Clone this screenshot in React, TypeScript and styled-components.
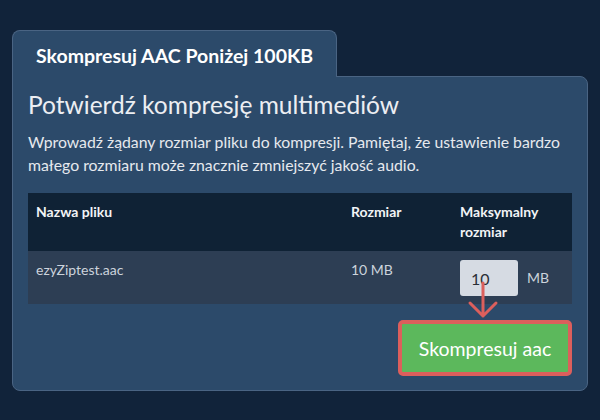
import styled, { createGlobalStyle } from "styled-components";

const GlobalStyle = createGlobalStyle`
  html, body {
    margin: 0;
    padding: 0;
    background: #11233a;
  }
  body {
    font-family: Lato, "Open Sans", sans-serif;
    color: #e8ebef;
  }
`;

const Page = styled.div`
  padding: 30px 12px 0;
`;

const Tab = styled.div`
  position: relative;
  z-index: 1;
  display: inline-flex;
  align-items: center;
  box-sizing: border-box;
  height: 47px;
  padding: 2px 23px 0 23px;
  margin-bottom: -1px;
  background: #2c4a6a;
  border: 1px solid #4a6483;
  border-bottom: none;
  border-radius: 8px 8px 0 0;
  font-size: 19.5px;
  font-weight: 700;
  color: #ffffff;
`;

const Panel = styled.section`
  background: #2c4a6a;
  border: 1px solid #4a6483;
  border-radius: 0 8px 8px 8px;
  padding: 13px 15px 14px 15px;
`;

const Heading = styled.h2`
  margin: 0;
  font-size: 24.5px;
  font-weight: 400;
  line-height: 30px;
  color: #eceef2;
`;

const Intro = styled.p`
  margin: 10px 0 17px;
  font-size: 15.8px;
  line-height: 23px;
  white-space: nowrap;
  color: #e6e9ee;
`;

const Table = styled.table`
  width: 100%;
  border-collapse: collapse;
  table-layout: fixed;
`;

const HeadCell = styled.th<{ $w?: number }>`
  width: ${(p) => (p.$w ? `${p.$w}px` : "auto")};
  background: #0f2235;
  padding: 9px 8px;
  text-align: left;
  vertical-align: top;
  font-size: 14px;
  font-weight: 700;
  line-height: 20px;
  color: #f2f4f6;
`;

const Cell = styled.td`
  background: #2d3e54;
  padding: 9px 8px 8px;
  vertical-align: top;
  font-size: 14px;
  line-height: 20px;
  color: #ccd3dc;
`;

const SizeBox = styled.div`
  position: relative;
  display: flex;
  align-items: center;
  gap: 9px;
  font-size: 14px;
  color: #ccd3dc;
`;

const SizeInput = styled.input`
  box-sizing: border-box;
  width: 58px;
  height: 36px;
  padding: 0 0 0 11px;
  border: none;
  border-radius: 3px;
  background: #d6dbe3;
  font-family: Lato, sans-serif;
  font-size: 16px;
  color: #2a2f36;
  outline: none;
`;

const Arrow = styled.svg`
  position: absolute;
  left: 9px;
  top: 22px;
  overflow: visible;
  pointer-events: none;
`;

const Actions = styled.div`
  display: flex;
  justify-content: flex-end;
  margin-top: 16px;
`;

const SubmitButton = styled.button`
  box-sizing: border-box;
  width: 174px;
  height: 56px;
  border: 4px solid #dc5f5c;
  border-radius: 5px;
  background: #5cb85c;
  font-family: Lato, sans-serif;
  font-size: 19.5px;
  font-weight: 400;
  color: #ffffff;
  cursor: pointer;
`;

export default function App() {
  return (
    <Page>
      <GlobalStyle />
      <Tab>Skompresuj AAC Poniżej 100KB</Tab>
      <Panel>
        <Heading>Potwierdź kompresję multimediów</Heading>
        <Intro>
          Wprowadź żądany rozmiar pliku do kompresji. Pamiętaj, że ustawienie bardzo
          <br />
          małego rozmiaru może znacznie zmniejszyć jakość audio.
        </Intro>
        <Table>
          <thead>
            <tr>
              <HeadCell>Nazwa pliku</HeadCell>
              <HeadCell $w={93}>Rozmiar</HeadCell>
              <HeadCell $w={104}>Maksymalny rozmiar</HeadCell>
            </tr>
          </thead>
          <tbody>
            <tr>
              <Cell>ezyZiptest.aac</Cell>
              <Cell>10 MB</Cell>
              <Cell>
                <SizeBox>
                  <SizeInput defaultValue="10" />
                  MB
                  <Arrow width="28" height="36" viewBox="0 0 28 36">
                    <path
                      d="M14 1 V34 M1 21 L14 34 L27 21"
                      fill="none"
                      stroke="#dc5f5c"
                      strokeWidth="3"
                      strokeLinecap="round"
                      strokeLinejoin="round"
                    />
                  </Arrow>
                </SizeBox>
              </Cell>
            </tr>
          </tbody>
        </Table>
        <Actions>
          <SubmitButton>Skompresuj aac</SubmitButton>
        </Actions>
      </Panel>
    </Page>
  );
}
